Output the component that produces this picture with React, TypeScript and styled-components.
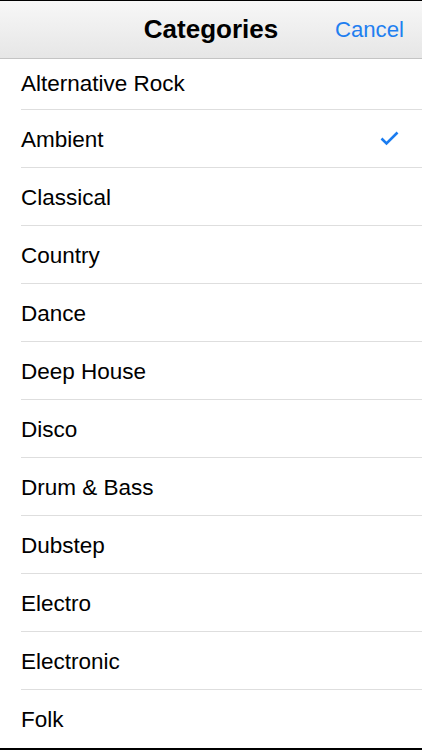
import styled, { createGlobalStyle } from "styled-components"

const categories = [
    "Alternative Rock",
    "Ambient",
    "Classical",
    "Country",
    "Dance",
    "Deep House",
    "Disco",
    "Drum & Bass",
    "Dubstep",
    "Electro",
    "Electronic",
    "Folk",
]

const selected = "Ambient"

export default function App() {
    return (
        <>
            <GlobalStyle />
            <Screen>
                <NavBar>
                    <Title>Categories</Title>
                    <CancelButton>Cancel</CancelButton>
                </NavBar>
                <List>
                    {categories.map((name, i) => (
                        <Row key={name} $clipped={i === 0}>
                            <Label>{name}</Label>
                            {name === selected && (
                                <svg width="19" height="15" viewBox="0 0 19 15">
                                    <path
                                        d="M1.5 7.5 L6.5 12.5 L17.5 1.5"
                                        fill="none"
                                        stroke="#1a7cf0"
                                        strokeWidth="2.6"
                                    />
                                </svg>
                            )}
                        </Row>
                    ))}
                </List>
            </Screen>
        </>
    )
}

const GlobalStyle = createGlobalStyle`
    html, body {
        margin: 0;
        padding: 0;
        background: #000;
    }
    body {
        font-family: "Liberation Sans", Arial, sans-serif;
    }
`

const Screen = styled.div`
    width: 422px;
    height: 750px;
    display: flex;
    flex-direction: column;
    background: #fff;
    border-top: 1px solid #000;
    border-bottom: 2px solid #000;
    box-sizing: border-box;
    overflow: hidden;
`

const NavBar = styled.header`
    position: relative;
    height: 57px;
    flex-shrink: 0;
    display: flex;
    align-items: center;
    justify-content: center;
    background: linear-gradient(#f7f7f7, #e6e6e6);
    border-bottom: 1px solid #c4c4c4;
`

const Title = styled.h1`
    margin: 0;
    font-size: 26px;
    font-weight: bold;
    color: #000;
`

const CancelButton = styled.button`
    position: absolute;
    right: 18px;
    top: 50%;
    transform: translateY(-50%);
    border: none;
    background: none;
    padding: 0;
    font-family: inherit;
    font-size: 22.2px;
    color: #1f7ff0;
    cursor: pointer;
`

const List = styled.ul`
    list-style: none;
    margin: 0;
    padding: 0 0 0 21px;
`

const Row = styled.li<{ $clipped?: boolean }>`
    height: ${p => (p.$clipped ? "46px" : "57px")};
    padding-bottom: ${p => (p.$clipped ? "4px" : "0")};
    box-sizing: content-box;
    display: flex;
    align-items: center;
    justify-content: space-between;
    padding-right: 23px;
    border-bottom: 1px solid #dedede;
    &:last-child {
        border-bottom: none;
    }
`

const Label = styled.span`
    padding-top: 3px;
    font-size: 22.5px;
    color: #000;
`
